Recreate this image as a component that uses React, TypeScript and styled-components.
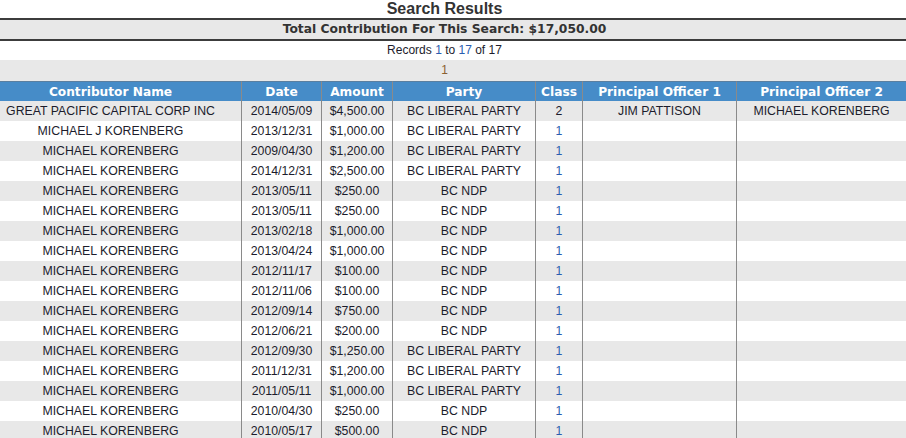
import React from "react";
import styled, { createGlobalStyle } from "styled-components";

const GlobalStyle = createGlobalStyle`
  html, body { margin: 0; padding: 0; background: #ffffff; }
  body { font-family: "Liberation Sans", Arial, sans-serif; color: #222233; }
`;

const Page = styled.div`
  width: 906px;
  overflow: hidden;
`;

const Title = styled.h1`
  margin: 0;
  height: 18px;
  padding-right: 17px;
  line-height: 18px;
  text-align: center;
  font-family: "Liberation Sans", Arial, sans-serif;
  font-size: 16px;
  font-weight: bold;
  color: #333333;
`;

const TotalBar = styled.div`
  height: 19px;
  padding-right: 17px;
  line-height: 19px;
  border-top: 2px solid #3c3c3c;
  border-bottom: 2px solid #3c3c3c;
  background: #e8e8e8;
  text-align: center;
  font-family: "DejaVu Sans", Verdana, sans-serif;
  font-size: 12.3px;
  font-weight: bold;
  color: #333333;
`;

const RecordsLine = styled.div`
  height: 19px;
  padding-right: 17px;
  line-height: 19px;
  text-align: center;
  font-size: 12px;
  color: #1c1c2c;
`;

const Num = styled.span`
  color: #2a5db0;
`;

const Pager = styled.div`
  height: 21px;
  padding-right: 17px;
  line-height: 21px;
  background: #e8e8e8;
  text-align: center;
  font-size: 12px;
  color: #8a6030;
`;

const Table = styled.table`
  width: 906px;
  table-layout: fixed;
  border-collapse: separate;
  border-spacing: 0;
  font-size: 12.3px;
`;

const HeadCell = styled.th<{ $first?: boolean }>`
  box-sizing: border-box;
  height: 20px;
  padding: 0 ${(p) => (p.$first ? "20px" : "0")} 0 0;
  background: #468cc8;
  color: #ffffff;
  font-family: "DejaVu Sans", Verdana, sans-serif;
  font-size: 12.2px;
  font-weight: bold;
  text-align: center;
  border-right: 1px solid #8a8a8a;
  border-top: 1px solid #5a7fa0;
  white-space: nowrap;
  &:last-child { border-right: none; }
`;

const Row = styled.tr<{ $striped: boolean }>`
  background: ${(p) => (p.$striped ? "#e8e8e8" : "#ffffff")};
`;

const Cell = styled.td<{ $first?: boolean }>`
  box-sizing: border-box;
  height: 20px;
  padding: 0 ${(p) => (p.$first ? "20px" : "0")} 0 0;
  text-align: center;
  white-space: nowrap;
  border-right: 1px solid #8a8a8a;
  color: #1c1c2c;
  &:last-child { border-right: none; }
`;

const ClassLink = styled.span<{ $link: boolean }>`
  color: ${(p) => (p.$link ? "#2a5db0" : "#1c1c2c")};
`;

type Rec = [string, string, string, string, string, string?, string?];

const rows: Rec[] = [
  ["GREAT PACIFIC CAPITAL CORP INC", "2014/05/09", "$4,500.00", "BC LIBERAL PARTY", "2", "JIM PATTISON", "MICHAEL KORENBERG"],
  ["MICHAEL J KORENBERG", "2013/12/31", "$1,000.00", "BC LIBERAL PARTY", "1"],
  ["MICHAEL KORENBERG", "2009/04/30", "$1,200.00", "BC LIBERAL PARTY", "1"],
  ["MICHAEL KORENBERG", "2014/12/31", "$2,500.00", "BC LIBERAL PARTY", "1"],
  ["MICHAEL KORENBERG", "2013/05/11", "$250.00", "BC NDP", "1"],
  ["MICHAEL KORENBERG", "2013/05/11", "$250.00", "BC NDP", "1"],
  ["MICHAEL KORENBERG", "2013/02/18", "$1,000.00", "BC NDP", "1"],
  ["MICHAEL KORENBERG", "2013/04/24", "$1,000.00", "BC NDP", "1"],
  ["MICHAEL KORENBERG", "2012/11/17", "$100.00", "BC NDP", "1"],
  ["MICHAEL KORENBERG", "2012/11/06", "$100.00", "BC NDP", "1"],
  ["MICHAEL KORENBERG", "2012/09/14", "$750.00", "BC NDP", "1"],
  ["MICHAEL KORENBERG", "2012/06/21", "$200.00", "BC NDP", "1"],
  ["MICHAEL KORENBERG", "2012/09/30", "$1,250.00", "BC LIBERAL PARTY", "1"],
  ["MICHAEL KORENBERG", "2011/12/31", "$1,200.00", "BC LIBERAL PARTY", "1"],
  ["MICHAEL KORENBERG", "2011/05/11", "$1,000.00", "BC LIBERAL PARTY", "1"],
  ["MICHAEL KORENBERG", "2010/04/30", "$250.00", "BC NDP", "1"],
  ["MICHAEL KORENBERG", "2010/05/17", "$500.00", "BC NDP", "1"],
];

const widths = [242, 80, 71, 143, 47, 154, 169];
const heads = ["Contributor Name", "Date", "Amount", "Party", "Class", "Principal Officer 1", "Principal Officer 2"];

export default function App() {
  return (
    <Page>
      <GlobalStyle />
      <Title>Search Results</Title>
      <TotalBar>Total Contribution For This Search: $17,050.00</TotalBar>
      <RecordsLine>
        Records <Num>1</Num> to <Num>17</Num> of 17
      </RecordsLine>
      <Pager>1</Pager>
      <Table>
        <colgroup>
          {widths.map((w, i) => (
            <col key={i} style={{ width: w }} />
          ))}
        </colgroup>
        <thead>
          <tr>
            {heads.map((h, i) => (
              <HeadCell key={h} $first={i === 0}>
                {h}
              </HeadCell>
            ))}
          </tr>
        </thead>
        <tbody>
          {rows.map((r, i) => (
            <Row key={i} $striped={i % 2 === 0}>
              <Cell $first>{r[0]}</Cell>
              <Cell>{r[1]}</Cell>
              <Cell>{r[2]}</Cell>
              <Cell>{r[3]}</Cell>
              <Cell>
                <ClassLink $link={r[4] === "1"}>{r[4]}</ClassLink>
              </Cell>
              <Cell>{r[5] ?? ""}</Cell>
              <Cell>{r[6] ?? ""}</Cell>
            </Row>
          ))}
        </tbody>
      </Table>
    </Page>
  );
}
